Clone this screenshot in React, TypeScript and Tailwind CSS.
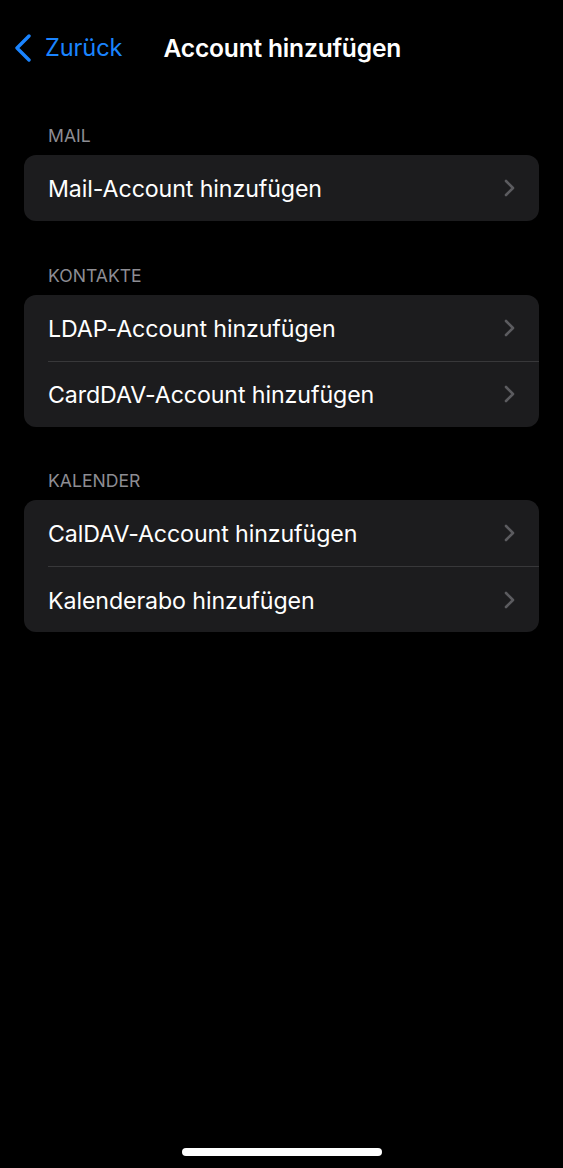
import React from "react";

interface Section {
  title: string;
  rows: string[];
}

const sections: Section[] = [
  { title: "MAIL", rows: ["Mail-Account hinzufügen"] },
  { title: "KONTAKTE", rows: ["LDAP-Account hinzufügen", "CardDAV-Account hinzufügen"] },
  { title: "KALENDER", rows: ["CalDAV-Account hinzufügen", "Kalenderabo hinzufügen"] },
];

function Chevron() {
  return (
    <svg width="11" height="18" viewBox="0 0 11 18" fill="none" className="shrink-0">
      <path d="M2 2l7 7-7 7" stroke="#5b5b5f" strokeWidth="2.6" strokeLinecap="round" strokeLinejoin="round" />
    </svg>
  );
}

export default function App() {
  return (
    <div
      className="relative h-[1168px] w-[563px] overflow-hidden bg-black text-white"
      style={{ fontFamily: "Inter, 'Noto Sans', sans-serif" }}
    >
      {/* Navigationsleiste */}
      <div className="flex h-[97px] items-center pl-[13px] pb-[1px]">
        <div className="flex items-center gap-[13px] text-[#1a84ff]">
          <svg width="19" height="28" viewBox="0 0 19 28" fill="none">
            <path d="M16 2L4 14l12 12" stroke="#1a84ff" strokeWidth="3.4" strokeLinecap="round" strokeLinejoin="round" />
          </svg>
          <span className="text-[23.6px] tracking-[-0.1px]">Zurück</span>
        </div>
        <span className="ml-[41px] text-[24.6px] font-semibold tracking-[-0.2px]">Account hinzufügen</span>
      </div>

      <div className="flex flex-col gap-[43.5px] px-[24px] pt-[28px]">
        {sections.map((section) => (
          <div key={section.title}>
            <div className="mb-[8px] pl-[24px] text-[17.6px] leading-[22px] text-[#8d8d93]">{section.title}</div>
            <div className="overflow-hidden rounded-[12px] bg-[#1c1c1e]">
              {section.rows.map((row, i) => (
                <div key={row} className="flex h-[66px] items-center pl-[24px]">
                  <div
                    className={`flex h-full flex-1 items-center justify-between pr-[24px] ${
                      i > 0 ? "border-t border-[#38383a]" : ""
                    }`}
                  >
                    <span className="pt-[3px] text-[23.2px] tracking-[-0.1px]">{row}</span>
                    <Chevron />
                  </div>
                </div>
              ))}
            </div>
          </div>
        ))}
      </div>

      {/* Home-Indikator */}
      <div className="absolute bottom-[12px] left-[182px] h-[8px] w-[200px] rounded-full bg-white" />
    </div>
  );
}
